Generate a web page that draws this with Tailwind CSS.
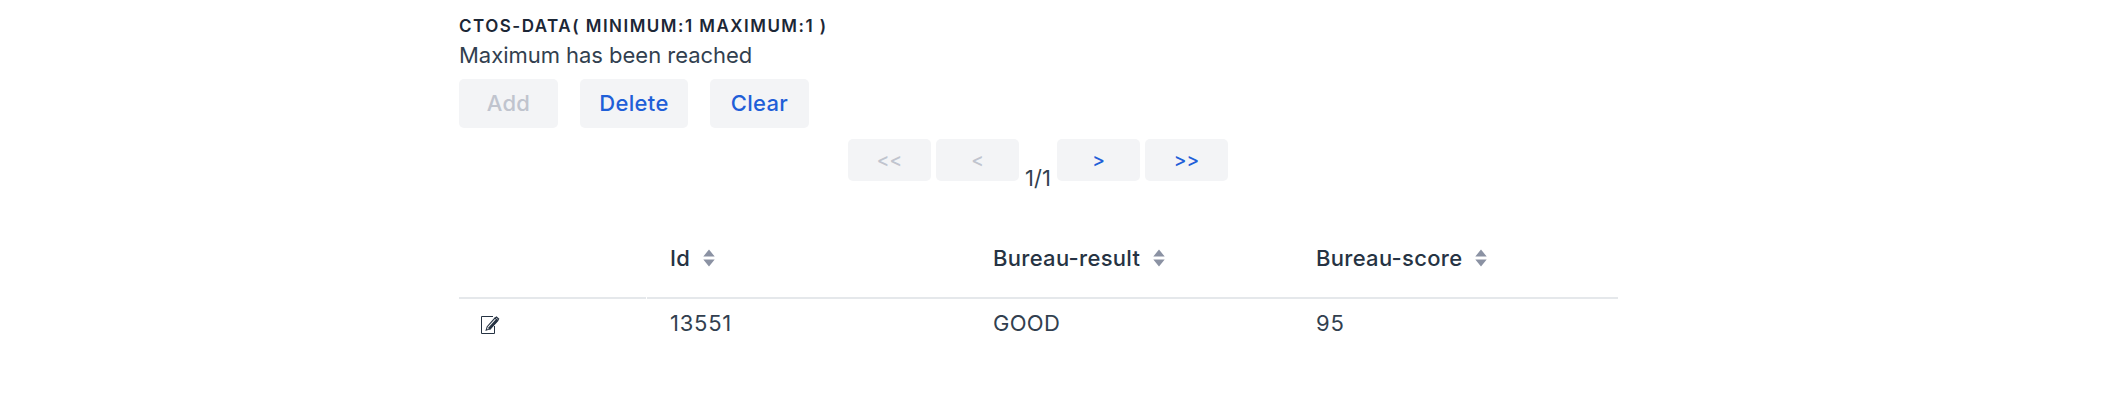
<!DOCTYPE html>
<html lang="en">
<head>
<meta charset="utf-8">
<title>CTOS-DATA</title>
<script src="https://cdn.jsdelivr.net/npm/@tailwindcss/browser@4"></script>
</head>
<body class="bg-white">
<main class="ml-[459px] flex h-[412px] w-[1159px] flex-col pt-[12px] font-['Inter',sans-serif] text-[22px] tracking-[0.3px] whitespace-nowrap text-[#323f4f]">
  <h2 class="h-[28px] text-[17px] leading-[29px] font-semibold tracking-[1.48px] text-[#1c2736]">CTOS-DATA( MINIMUM:1 MAXIMUM:1 )</h2>
  <p class="h-[39px] leading-[31px] tracking-[-0.03px]">Maximum has been reached</p>
  <div class="flex h-[49px] gap-[22px] font-medium text-[#1f5fd8]">
    <button disabled class="w-[99px] rounded-[5px] bg-[#f3f4f6] text-[#c0c4ce]">Add</button>
    <button class="w-[108px] rounded-[5px] bg-[#f3f4f6]">Delete</button>
    <button class="w-[99px] rounded-[5px] bg-[#f3f4f6]">Clear</button>
  </div>
  <nav class="mt-[11px] ml-[389px] flex h-[78px] items-start text-[19px] font-medium tracking-normal text-[#1f5fd8]">
    <button disabled class="mr-[5px] h-[42px] w-[83px] rounded-[5px] bg-[#f3f4f6] pt-[2px] text-[#c0c4ce]">&lt;&lt;</button>
    <button disabled class="h-[42px] w-[83px] rounded-[5px] bg-[#f3f4f6] pt-[2px] text-[#c0c4ce]">&lt;</button>
    <span class="mt-[24px] w-[38px] text-center text-[22px] leading-[30px] font-normal text-[#323f4f]">1/1</span>
    <button class="mr-[5px] h-[42px] w-[83px] rounded-[5px] bg-[#f3f4f6] pt-[2px]">&gt;</button>
    <button class="h-[42px] w-[83px] rounded-[5px] bg-[#f3f4f6] pt-[2px]">&gt;&gt;</button>
  </nav>
  <div class="grid h-[82px] grid-cols-[188px_323px_323px_325px] font-medium text-[#263343]">
    <div class="mr-px border-b-2 border-[#e5e8eb]"></div>
    <div class="flex items-center gap-[13px] border-b-2 border-[#e5e8eb] pt-[2px] pl-[23px]">Id
      <svg class="h-[18px] w-[12px] fill-[#8b92a3]" viewBox="0 0 12 18"><path d="M6 .5l5.7 7H.3zM.3 10.5h11.4L6 17.5z"/></svg></div>
    <div class="flex items-center gap-[13px] border-b-2 border-[#e5e8eb] pt-[2px] pl-[23px]">Bureau-result
      <svg class="h-[18px] w-[12px] fill-[#8b92a3]" viewBox="0 0 12 18"><path d="M6 .5l5.7 7H.3zM.3 10.5h11.4L6 17.5z"/></svg></div>
    <div class="flex items-center gap-[13px] border-b-2 border-[#e5e8eb] pt-[2px] pl-[23px]">Bureau-score
      <svg class="h-[18px] w-[12px] fill-[#8b92a3]" viewBox="0 0 12 18"><path d="M6 .5l5.7 7H.3zM.3 10.5h11.4L6 17.5z"/></svg></div>
  </div>
  <div class="grid h-[49px] grid-cols-[188px_323px_323px_325px] items-center">
    <div class="pl-[22px]">
      <svg class="mt-[4px] h-[19px] w-[19px]" viewBox="0 0 19 19" fill="none" stroke="#263343"><path d="M12 .5H.5v17h13V10" stroke-width="1"/><path d="M5.2 14.2l1-3.5 7.7-8.6 2.7 2.3-7.7 8.5z" stroke-width="1.1"/><path d="M8 13l8.2-9" stroke-width="2.8"/><path d="M14 2.2l1.4-1.1 2.2 1.9-.8 1.4" stroke-width="1.2"/></svg>
    </div>
    <div class="pl-[23px] tracking-[0.75px]">13551</div>
    <div class="pl-[23px]">GOOD</div>
    <div class="pl-[23px] tracking-[0.75px]">95</div>
  </div>
</main>
</body>
</html>
